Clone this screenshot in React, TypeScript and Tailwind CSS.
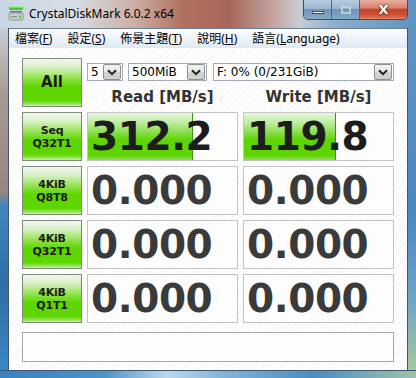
import React from "react";

const sans = { fontFamily: '"Noto Sans", "Open Sans", sans-serif' };
const cjk = { fontFamily: '"Noto Sans", "Noto Sans CJK TC", sans-serif' };
const dv = { fontFamily: '"DejaVu Sans", Verdana, sans-serif' };

function AppIcon() {
  return (
    <svg width="16" height="16" viewBox="0 0 16 16">
      <rect x="1" y="1" width="14" height="4" rx="1" fill="#3fc83a" />
      <rect x="1" y="1" width="14" height="1.5" rx="0.7" fill="#9ff09a" />
      <rect x="2" y="6" width="12" height="1.5" fill="#6d7a74" />
      <rect x="1" y="8" width="14" height="7" rx="1.5" fill="#c9cfcc" stroke="#7c8581" strokeWidth="0.8" />
      <rect x="3" y="11" width="6" height="1.5" fill="#8e9692" />
      <circle cx="12" cy="11.8" r="1.3" fill="#3bd63a" />
    </svg>
  );
}

function Chevron() {
  return (
    <svg width="10" height="7" viewBox="0 0 10 7">
      <path d="M1 1.2 L5 5.2 L9 1.2" fill="none" stroke="#222" strokeWidth="2" />
    </svg>
  );
}

function Combo({ text, w, cls }: { text: string; w: string; cls?: string }) {
  return (
    <div
      className={`${w} ${cls ?? ""} h-[18px] flex items-center border border-[#a5acb5] bg-white`}
    >
      <span className="flex-1 pl-[3px] text-[12px] leading-none text-black truncate" style={dv}>
        {text}
      </span>
      <div className="w-[18px] h-[16px] mr-px flex items-center justify-center border border-[#8e8f8f] rounded-[2px] bg-[linear-gradient(180deg,#f2f2f2_0%,#e6e6e6_50%,#d4d4d4_51%,#cfcfcf_100%)]">
        <Chevron />
      </div>
    </div>
  );
}

function TestButton({ lines, big }: { lines: string[]; big?: boolean }) {
  return (
    <div
      className="w-[60px] h-[49px] flex flex-col items-center justify-center border border-[#7e8a7a] bg-[linear-gradient(180deg,#f4f6f2_0%,#d6f0c4_18%,#8fe048_42%,#5ed600_58%,#5ed600_88%,#98e660_96%,#c8f0a8_100%)] text-[#1a1a1a] font-bold"
      style={dv}
    >
      {lines.map((l) => (
        <span
          key={l}
          className={big ? "text-[15px] leading-none" : "text-[11px] leading-[13px] tracking-[-0.2px]"}
        >
          {l}
        </span>
      ))}
    </div>
  );
}

function Result({ value, bar, dark }: { value: string; bar: number; dark?: boolean }) {
  return (
    <div className="relative w-[151px] h-[49px] border border-[#c3c3c3] bg-[#fdfdfd] flex items-center">
      {bar > 0 && (
        <div
          className="absolute left-0 top-0 bottom-0 border-r border-[#3f8f1c] bg-[linear-gradient(180deg,#e6f6dc_0%,#bfeca2_20%,#86de48_42%,#5ed400_58%,#5ed400_90%,#8ee258_100%)]"
          style={{ width: bar }}
        />
      )}
      <span
        className={`relative pl-[3px] text-[39px] leading-none font-bold tracking-[-0.4px] ${
          dark ? "text-[#1c1c1c]" : "text-[#3a3a3a]"
        }`}
        style={dv}
      >
        {value}
      </span>
    </div>
  );
}

const rows = [
  { lines: ["Seq", "Q32T1"], read: "312.2", rbar: 105, write: "119.8", wbar: 92 },
  { lines: ["4KiB", "Q8T8"], read: "0.000", rbar: 0, write: "0.000", wbar: 0 },
  { lines: ["4KiB", "Q32T1"], read: "0.000", rbar: 0, write: "0.000", wbar: 0 },
  { lines: ["4KiB", "Q1T1"], read: "0.000", rbar: 0, write: "0.000", wbar: 0 },
];

const menu = [
  { t: "檔案(", k: "F" },
  { t: "設定(", k: "S" },
  { t: "佈景主題(", k: "T" },
  { t: "說明(", k: "H" },
  { t: "語言(", k: "L", rest: "anguage" },
];

export default function App() {
  return (
    <div className="w-[416px] h-[378px] flex flex-col overflow-hidden bg-[#5a88b0]">
      {/* title bar */}
      <div className="h-[28px] flex items-start bg-[linear-gradient(90deg,#c8d7e4_0%,#d7dde4_18%,#cdb0a8_32%,#b0705f_44%,#a8665a_55%,#c4a6a2_66%,#c9ccd4_72%,#8db0cd_80%,#5f93c0_100%)]">
        <div className="pl-[8px] pt-[5px]">
          <AppIcon />
        </div>
        <span className="ml-[5px] mt-[6px] text-[12px] leading-[16px] text-black" style={sans}>
          CrystalDiskMark 6.0.2 x64
        </span>
        <div className="ml-auto mr-[8px] flex h-[20px] border border-t-0 border-[#3b4f66] rounded-b-[5px] overflow-hidden">
          <div className="w-[28px] flex items-end justify-center pb-[5px] border-r border-[#51677e] bg-[linear-gradient(180deg,#b8cde0_0%,#9bb6cf_45%,#6f95b8_50%,#86a9c8_100%)]">
            <div className="w-[12px] h-[3px] bg-white border border-[#3d5066]" />
          </div>
          <div className="w-[28px] flex items-center justify-center border-r border-[#51677e] bg-[linear-gradient(180deg,#b8cde0_0%,#9bb6cf_45%,#6f95b8_50%,#86a9c8_100%)]">
            <div className="w-[10px] h-[8px] border-2 border-[#c8d6e4] opacity-80" />
          </div>
          <div className="w-[47px] flex items-center justify-center bg-[linear-gradient(180deg,#e8b0a0_0%,#d88470_40%,#c2402a_52%,#d25a3c_85%,#e28a60_100%)]">
            <span className="text-white font-bold text-[13px] leading-none drop-shadow-[0_0_1px_#3a1a10]" style={dv}>
              X
            </span>
          </div>
        </div>
      </div>

      {/* middle */}
      <div className="flex-1 flex">
        <div className="w-[8px] bg-[linear-gradient(180deg,#c8cdd3_0%,#a8988f_20%,#978680_48%,#3f86c0_52%,#2e6ea6_75%,#3b86c4_100%)]" />
        <div className="flex-1 flex flex-col border-x border-[#3e5670]">
          {/* menu */}
          <div
            className="h-[20px] flex items-center pl-[6px] gap-[15px] text-[12px] text-black bg-[linear-gradient(180deg,#fbfcfe_0%,#eef3fa_50%,#dfe8f3_100%)] border-t border-[#6c829a]"
            style={cjk}
          >
            {menu.map((m) => (
              <span key={m.t} className="leading-none">
                {m.t}
                <u>{m.k}</u>
                {m.rest ?? ""})
              </span>
            ))}
          </div>

          {/* client */}
          <div className="flex-1 flex flex-col pl-[13px] pt-[10px] bg-[repeating-linear-gradient(-45deg,#ffffff_0px,#ffffff_3px,#f5f5f5_3px,#f5f5f5_4px)]">
            <div className="flex gap-[5px]">
              <TestButton lines={["All"]} big />
              <div className="flex flex-col">
                <div className="flex mt-[5px]">
                  <Combo text="5" w="w-[36px]" />
                  <Combo text="500MiB" w="w-[79px]" cls="ml-[5px]" />
                  <Combo text="F: 0% (0/231GiB)" w="w-[181px]" cls="ml-[6px]" />
                </div>
                <div className="flex mt-[7px] h-[19px] text-[15px] leading-[19px] font-bold text-[#333]" style={dv}>
                  <span className="w-[151px] text-center">Read [MB/s]</span>
                  <span className="w-[151px] ml-[5px] text-center">Write [MB/s]</span>
                </div>
              </div>
            </div>

            {rows.map((r) => (
              <div key={r.lines.join()} className="flex gap-[5px] mt-[5px]">
                <TestButton lines={r.lines} />
                <Result value={r.read} bar={r.rbar} dark={r.rbar > 0} />
                <Result value={r.write} bar={r.wbar} dark={r.wbar > 0} />
              </div>
            ))}

            <div className="mt-[9px] w-[372px] h-[30px] border border-[#a8a8a8] bg-[#fdfdfd]" />
          </div>
        </div>
        <div className="w-[8px] bg-[linear-gradient(180deg,#5f93c0_0%,#4a88c0_55%,#6fa6c8_80%,#a9c79a_100%)]" />
      </div>

      {/* bottom frame */}
      <div className="h-[8px] bg-[linear-gradient(90deg,#3c82bd_0%,#4d93c8_25%,#bcd8ea_40%,#7fb1d6_55%,#4a8cc4_75%,#9fc4a4_100%)] border-t border-[#3e5670]" />
    </div>
  );
}
